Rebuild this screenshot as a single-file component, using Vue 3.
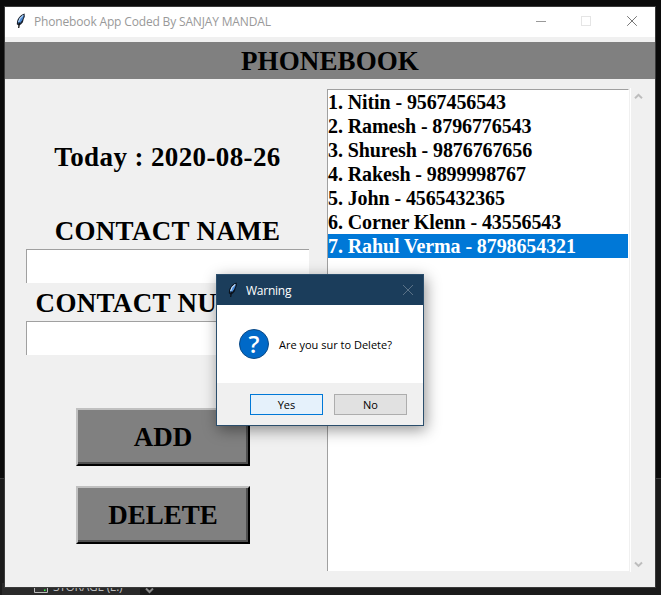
<script setup>
const contacts = [
  '1. Nitin - 9567456543',
  '2. Ramesh - 8796776543',
  '3. Shuresh - 9876767656',
  '4. Rakesh - 9899998767',
  '5. John - 4565432365',
  '6. Corner Klenn - 43556543',
  '7. Rahul Verma - 8798654321',
]
const selected = 6
</script>

<template>
  <div class="desktop">
    <main class="window">
      <header class="titlebar">
        <svg class="feather" width="10" height="16" viewBox="0 0 10 16">
          <path d="M8.6.5C5.4 1.2 2.3 4.5 1.1 8.2L.8 11.2l1.7 1.3 2.4-.9 2-2.4.9-3.4 1-2.1z" fill="#1a2230" />
          <path d="M7.8 1.7C5.6 3 3.3 5.2 2.2 8.4l.1 2.4 2.1-1 1.7-2.6 1.2-3z" fill="#4b8bd8" />
          <path d="M7.2 2.4 4 5.4 2.6 9" fill="none" stroke="#b9d9f8" stroke-width="1.1" />
          <path d="M3.4 9.500 2.700 15" fill="none" stroke="#111" stroke-width="1.300" />
        </svg>
        <span class="apptitle">Phonebook App Coded By SANJAY MANDAL</span>
        <svg class="controls" width="112" height="30" viewBox="0 0 112 30" fill="none" shape-rendering="crispEdges">
          <path d="M6 14.5h10" stroke="#999" />
          <path d="M51.5 9.5h9v9h-9z" stroke="#e5e5e5" />
          <path d="m97.2 9.2 9.6 9.6m0-9.6-9.6 9.6" stroke="#777" shape-rendering="auto" />
        </svg>
      </header>
      <h1 class="banner">PHONEBOOK</h1>
      <div class="content">
        <section class="form">
          <div class="today">Today : 2020-08-26</div>
          <label class="label">CONTACT NAME</label>
          <div class="entry"></div>
          <label class="label second">CONTACT NUMBER</label>
          <div class="entry"></div>
          <div class="action first">ADD</div>
          <div class="action">DELETE</div>
        </section>
        <section class="list">
          <div v-for="(c, i) in contacts" :key="c" class="row" :class="{ on: i === selected }">{{ c }}</div>
        </section>
        <div class="scroll">
          <svg width="9" height="7" viewBox="0 0 9 7"><path d="M1 5.3 4.5 1.9 8 5.3" fill="none" stroke="#bdbdbd" stroke-width="2" /></svg>
          <svg width="9" height="7" viewBox="0 0 9 7"><path d="M1 1.5 4.5 4.9 8 1.5" fill="none" stroke="#bdbdbd" stroke-width="2" /></svg>
        </div>
      </div>
    </main>

    <footer class="taskstrip">
      <div class="drive">
        <svg width="14" height="12" viewBox="0 0 14 12">
          <path d="M.5 1.5h13v8H.5z" fill="#333" stroke="#bbb" />
          <path d="M10 6.500h1.500V8H10z" fill="#3f4" />
        </svg>
        <span class="drivename">STORAGE (E:)</span>
      </div>
      <svg class="chev" width="20" height="12" viewBox="0 0 20 12"><path d="m6 5.500 3.500 3.500L13 5.500" fill="none" stroke="#888" stroke-width="2" /></svg>
    </footer>

    <div class="dialog">
      <div class="dtitle">
        <svg class="feather" width="10" height="16" viewBox="0 0 10 16">
          <path d="M8.6.5C5.4 1.2 2.3 4.5 1.1 8.2L.8 11.2l1.7 1.3 2.4-.9 2-2.4.9-3.4 1-2.1z" fill="#0a111b" />
          <path d="M7.8 1.7C5.6 3 3.3 5.2 2.2 8.4l.1 2.4 2.1-1 1.7-2.6 1.2-3z" fill="#4b8bd8" />
          <path d="M7.2 2.4 4 5.4 2.6 9" fill="none" stroke="#c9e2fa" stroke-width="1.100" />
          <path d="M3.400 9.500 2.700 15" fill="none" stroke="#0a111b" stroke-width="1.300" />
        </svg>
        <span class="dname">Warning</span>
        <svg class="dclose" width="12" height="12" viewBox="0 0 12 12"><path d="m1 1 10 10M11 1 1 11" fill="none" stroke="#5b7287" /></svg>
      </div>
      <div class="dbody">
        <div class="question">?</div>
        <span class="message">Are you sur to Delete?</span>
      </div>
      <div class="dfoot">
        <div class="btn primary">Yes</div>
        <div class="btn">No</div>
      </div>
    </div>
  </div>
</template>

<style>
body { margin: 0; overflow: hidden; }
</style>

<style scoped>
* { box-sizing: border-box; }
.desktop {
  position: relative;
  width: 661px;
  height: 595px;
  padding: 6px 5px 0 4px;
  overflow: hidden;
  background: linear-gradient(#0b0b0b 0 478px, #383838 478px 479px, #1b1b1b 479px);
  font-family: "Open Sans", "Noto Sans", sans-serif;
}
.window {
  position: relative;
  z-index: 1;
  width: 652px;
  height: 582px;
  border: 1px solid #3a3a3a;
  background: #f0f0f0;
}
.titlebar { display: flex; align-items: flex-start; height: 30px; background: #fff; }
.titlebar .feather { margin: 6px 0 0 11px; }
.apptitle { margin-left: 8px; font-size: 12px; line-height: 29px; letter-spacing: -.16px; color: #999; white-space: nowrap; }
.controls { margin-left: auto; margin-right: 13px; }
.banner {
  height: 37px;
  margin: 5px 0 0;
  background: #808080;
  color: #000;
  font: bold 27px/38px "Liberation Serif", serif;
  letter-spacing: .1px;
  text-align: center;
}
.content { display: flex; height: 508px; }
.form {
  display: flex;
  flex-direction: column;
  align-items: center;
  width: 322px;
  padding: 62px 0 0 3px;
  font: bold 27px/32px "Liberation Serif", serif;
}
.form > * { flex: none; white-space: nowrap; }
.today { margin-right: 0; letter-spacing: .38px; }
.label { margin: 42px 0 2px; letter-spacing: .33px; }
.label.second { margin: 4px 0 2px; }
.entry {
  width: 283px;
  height: 34px;
  margin-right: 1px;
  background: #fff;
  border-top: 1px solid #a0a0a0;
  border-left: 1px solid #a0a0a0;
}
.action {
  width: 174px;
  height: 58px;
  margin: 20px 9px 0 0;
  border: solid 2px;
  border-color: #c0c0c0 #000 #000 #c0c0c0;
  box-shadow: inset -2px -2px #505050;
  background: #808080;
  line-height: 55px;
  text-align: center;
}
.action.first { margin-top: 53px; }
.list {
  width: 302px;
  height: 482px;
  margin-top: 10px;
  border: solid #a0a0a0;
  border-width: 1px 0 0 1px;
  border-right: 1px solid #fff;
  background: #fff;
  font: bold 20px/24px "Liberation Serif", serif;
  letter-spacing: -.1px;
}
.row { height: 24px; white-space: pre; }
.row.on { background: #0078d7; color: #fff; }
.scroll {
  display: flex;
  flex-direction: column;
  justify-content: space-between;
  width: 14px;
  height: 484px;
  margin: 9px 0 0 1px;
  padding: 5px 0 4px 3px;
  border-left: 1px solid #fff;
}
.scroll svg { flex: none; }
.taskstrip { display: flex; height: 12px; margin: -5px -5px 0 -4px; padding-left: 2px; }
.drive { display: flex; width: 138px; padding-left: 32px; background: #2a2a2a; }
.drivename { margin: -5px 0 0 5px; font-size: 12px; line-height: 17px; letter-spacing: -.3px; color: #bbb; white-space: nowrap; }
.dialog {
  position: absolute;
  z-index: 2;
  left: 216px;
  top: 274px;
  width: 208px;
  height: 152px;
  border: 1px solid #2b4e6c;
  background: #fff;
  box-shadow: 2px 4px 14px rgba(0, 0, 0, .42);
}
.dtitle { display: flex; align-items: center; height: 30px; padding: 0 9px 0 11px; background: #1b3d5b; color: #fff; }
.dname { margin-left: 8px; font-size: 12px; letter-spacing: -.25px; }
.dclose { margin-left: auto; margin-top: -1px; }
.dbody { display: flex; align-items: center; height: 78px; padding-left: 22px; }
.question {
  width: 30px;
  height: 30px;
  border: 1px solid #0c4a86;
  border-radius: 50%;
  background: #0069c8;
  color: #fff;
  font-size: 24px;
  font-weight: 600;
  line-height: 27px;
  text-align: center;
}
.message { margin: 1px 0 0 10px; font-size: 11px; color: #000; white-space: nowrap; }
.dfoot { display: flex; gap: 11px; height: 42px; padding: 11px 0 0 33px; background: #f0f0f0; }
.btn { width: 73px; height: 21px; border: 1px solid #adadad; background: #e1e1e1; font-size: 11px; line-height: 20px; text-align: center; }
.btn.primary { border-color: #0078d7; background: #e5f1fb; }
</style>
